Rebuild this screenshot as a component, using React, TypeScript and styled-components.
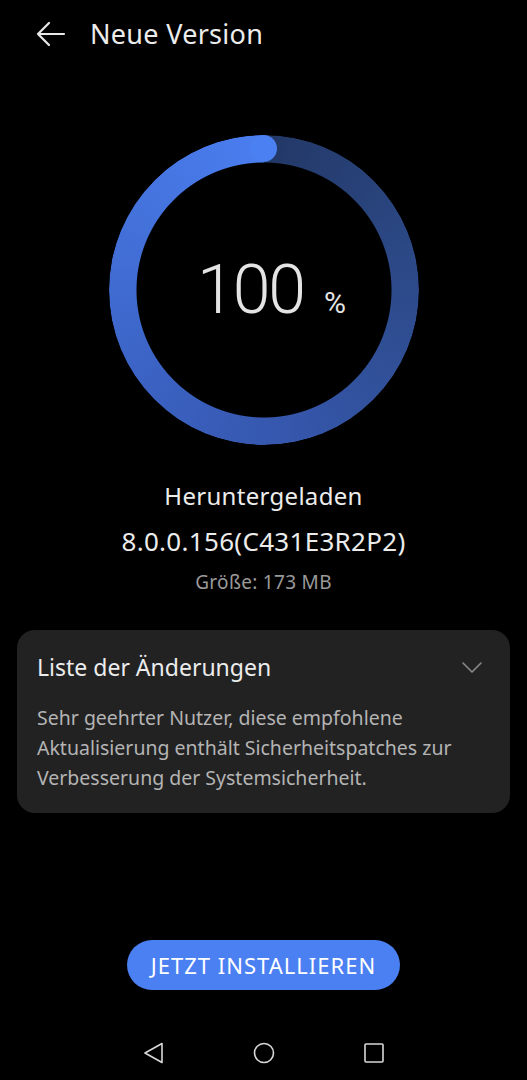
import * as React from 'react';
import styled, { createGlobalStyle } from 'styled-components';

const Global = createGlobalStyle`
  html, body {
    margin: 0;
    padding: 0;
    background: #000;
  }
  body {
    font-family: "Noto Sans", Roboto, "Liberation Sans", sans-serif;
    color: #e8e8e8;
  }
`;

const Screen = styled.div`
  width: 527px;
  height: 1080px;
  background: #000;
  display: flex;
  flex-direction: column;
  overflow: hidden;
`;

const TopBar = styled.div`
  height: 68px;
  display: flex;
  align-items: center;
  padding-left: 36px;
  gap: 24px;
`;

const Title = styled.div`
  font-size: 27px;
  line-height: 34px;
  color: #ececec;
  letter-spacing: 0.3px;
`;

const RingWrap = styled.div`
  margin: 67px auto 0;
  width: 310px;
  height: 310px;
  position: relative;
  display: flex;
  align-items: center;
  justify-content: center;
`;

const Ring = styled.div`
  position: absolute;
  inset: 0;
  border-radius: 50%;
  background: conic-gradient(
    from 0deg,
    #223866 0deg,
    #2a457f 60deg,
    #304f96 120deg,
    #3658b0 180deg,
    #3c64c6 240deg,
    #4472db 300deg,
    #4a7def 358deg
  );
  -webkit-mask: radial-gradient(circle, transparent 127px, #000 128px);
  mask: radial-gradient(circle, transparent 127px, #000 128px);
`;

const Cap = styled.div`
  position: absolute;
  top: 0;
  left: 141px;
  width: 27px;
  height: 27px;
  border-radius: 50%;
  background: #4b80f2;
`;

const Percent = styled.div`
  display: flex;
  align-items: baseline;
  gap: 20px;
  color: #e4e4e4;
  font-family: Roboto, sans-serif;
  font-weight: 300;
  position: relative;
  left: 8px;
`;

const Big = styled.span`
  font-size: 68px;
  letter-spacing: -2px;
`;

const Small = styled.span`
  font-size: 30px;
  font-weight: 400;
`;

const Info = styled.div`
  margin-top: 35px;
  display: flex;
  flex-direction: column;
  align-items: center;
`;

const Status = styled.div<{ size: number; lh: number; color: string; mt?: number }>`
  font-size: ${(p) => p.size}px;
  line-height: ${(p) => p.lh}px;
  color: ${(p) => p.color};
  margin-top: ${(p) => p.mt || 0}px;
  letter-spacing: 0.3px;
`;

const Card = styled.div`
  margin: 35px 17px 0;
  background: #222223;
  border-radius: 18px;
  padding: 22px 20px 20px 20px;
`;

const CardHead = styled.div`
  display: flex;
  justify-content: space-between;
  align-items: center;
  padding-right: 8px;
`;

const CardTitle = styled.div`
  font-size: 23px;
  line-height: 30px;
  color: #ececec;
`;

const CardBody = styled.div`
  margin-top: 21px;
  font-size: 19.5px;
  line-height: 30px;
  color: #b4b4b4;
`;

const Spacer = styled.div`
  flex: 1;
`;

const Button = styled.button`
  align-self: center;
  width: 273px;
  height: 50px;
  padding: 0;
  border: none;
  border-radius: 25px;
  background: #4b80f2;
  color: #fff;
  font-family: inherit;
  font-size: 22px;
  letter-spacing: 1px;
  margin-bottom: 52px;
`;

const NavBar = styled.div`
  height: 38px;
  display: flex;
  justify-content: center;
  align-items: flex-start;
  gap: 88px;
`;

const NavIcon = styled.svg`
  width: 22px;
  height: 22px;
`;

export default function App() {
  return (
    <Screen>
      <Global />
      <TopBar>
        <svg width="30" height="26" viewBox="0 0 30 26" fill="none">
          <path d="M28 13H2M13 2L2 13l11 11" stroke="#e8e8e8" strokeWidth="2.2" strokeLinecap="round" strokeLinejoin="round" />
        </svg>
        <Title>Neue Version</Title>
      </TopBar>
      <RingWrap>
        <Ring />
        <Cap />
        <Percent>
          <Big>100</Big>
          <Small>%</Small>
        </Percent>
      </RingWrap>
      <Info>
        <Status size={24} lh={32} color="#ececec">Heruntergeladen</Status>
        <Status size={26} lh={34} color="#ececec" mt={12}>8.0.0.156(C431E3R2P2)</Status>
        <Status size={19} lh={26} color="#9a9a9a" mt={11}>Größe: 173 MB</Status>
      </Info>
      <Card>
        <CardHead>
          <CardTitle>Liste der Änderungen</CardTitle>
          <svg width="20" height="11" viewBox="0 0 20 11" fill="none">
            <path d="M1 1l9 9 9-9" stroke="#8a8a8a" strokeWidth="1.6" strokeLinecap="round" strokeLinejoin="round" />
          </svg>
        </CardHead>
        <CardBody>
          Sehr geehrter Nutzer, diese empfohlene Aktualisierung enthält Sicherheitspatches zur Verbesserung der
          Systemsicherheit.
        </CardBody>
      </Card>
      <Spacer />
      <Button>JETZT INSTALLIEREN</Button>
      <NavBar>
        <NavIcon viewBox="0 0 22 22" fill="none">
          <path d="M19 1.5L2 11l17 9.5z" stroke="#d8d8d8" strokeWidth="1.6" strokeLinejoin="round" />
        </NavIcon>
        <NavIcon viewBox="0 0 22 22" fill="none">
          <circle cx="11" cy="11" r="9.5" stroke="#d8d8d8" strokeWidth="1.6" />
        </NavIcon>
        <NavIcon viewBox="0 0 22 22" fill="none">
          <rect x="2" y="2" width="18" height="18" rx="1" stroke="#d8d8d8" strokeWidth="1.6" />
        </NavIcon>
      </NavBar>
    </Screen>
  );
}
